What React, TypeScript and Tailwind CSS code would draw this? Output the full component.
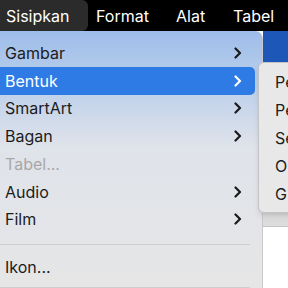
import React from "react";

const Chevron = ({ color = "#1a1a1a" }: { color?: string }) => (
  <svg width="8" height="12" viewBox="0 0 8 12" fill="none">
    <path d="M1.5 1.5 L6 6 L1.5 10.5" stroke={color} strokeWidth="2.2" strokeLinecap="round" strokeLinejoin="round" />
  </svg>
);

type Item = { label: string; sub?: boolean; disabled?: boolean; active?: boolean };

const items: Item[] = [
  { label: "Gambar", sub: true },
  { label: "Bentuk", sub: true, active: true },
  { label: "SmartArt", sub: true },
  { label: "Bagan", sub: true },
  { label: "Tabel...", disabled: true },
  { label: "Audio", sub: true },
  { label: "Film", sub: true },
];

export default function App() {
  return (
    <div
      className="relative w-[288px] h-[288px] overflow-hidden bg-white"
      style={{ fontFamily: "Inter, 'Liberation Sans', sans-serif" }}
    >
      <div className="flex items-center h-[31px] bg-black text-white text-[16px]">
        <div className="h-full flex items-center pl-[6px] w-[88px] bg-[#2b2b2b] rounded-r-[6px]">Sisipkan</div>
        <div className="pl-[8px] w-[88px]">Format</div>
        <div className="w-[57px]">Alat</div>
        <div>Tabel</div>
      </div>
      <div className="flex h-[257px]">
        <div className="w-[263px] h-full rounded-tr-[8px] border-r border-[#c9c9c9] bg-gradient-to-b from-[#9dbdea] via-[#dfe3ea] via-45% to-[#e6e6e6] flex flex-col pt-[8px] text-[16px] text-[#1c1c1c]">
          {items.map((it) => (
            <div
              key={it.label}
              className={
                "h-[28px] flex items-center justify-between pl-[5px] pr-[13px] mr-[7px] " +
                (it.active ? "bg-[#2f7be6] text-white rounded-r-[5px]" : "") +
                (it.disabled ? " text-[#a8a8a8]" : "")
              }
            >
              <span>{it.label}</span>
              {it.sub && <Chevron color={it.active ? "#ffffff" : "#1a1a1a"} />}
            </div>
          ))}
          <div className="h-px bg-[#cdcdcd] mr-[12px] mt-[11px] mb-[8px]" />
          <div className="h-[28px] flex items-center pl-[5px]">Ikon...</div>
          <div className="h-px bg-[#cdcdcd] mr-[12px] mt-[6px]" />
        </div>
        <div className="flex-1 flex flex-col">
          <div className="h-[31px] bg-[#1d57b8]" />
          <div className="h-[150px] bg-[#e4e4e4]" />
          <div className="h-[15px] bg-[#dcdcdc] border-b border-[#c4c4c4]" />
          <div className="flex-1 bg-white" />
        </div>
      </div>
      <div className="absolute left-[258px] top-[62px] w-[60px] h-[151px] rounded-[6px] bg-[#e8e8e8] border border-[#c4c4c4] shadow-md flex flex-col pt-[5px] text-[16px] text-[#1c1c1c]">
        {["Pe", "Pe", "Se", "O", "G"].map((t, i) => (
          <div key={i} className="h-[28px] flex items-center pl-[16px] whitespace-nowrap">{t}</div>
        ))}
      </div>
    </div>
  );
}
